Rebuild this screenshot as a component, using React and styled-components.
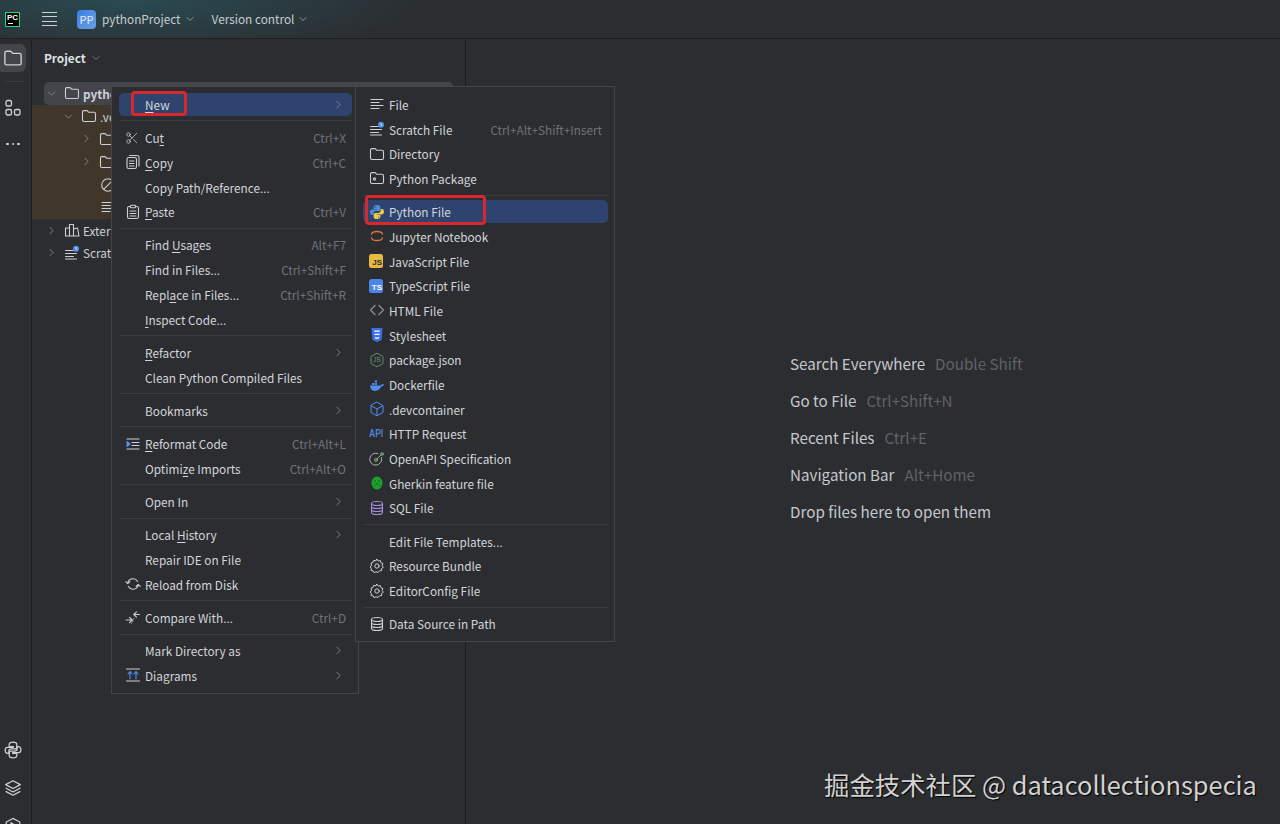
import React from "react";
import styled, { createGlobalStyle } from "styled-components";
import { ChevronDown, ChevronRight, Scissors } from "lucide-react";

const GlobalStyle = createGlobalStyle`
  html, body { margin: 0; padding: 0; height: 100%; background: #2b2d30; }
  #root { height: 100%; }
  * { box-sizing: border-box; }
`;

const PY_PATH =
  "M8 1C5.2 1 4.6 2.2 4.6 3.4V5h3.6v.6H3.1C1.8 5.6 1 6.8 1 8.2c0 1.5.8 2.7 2.1 2.7h1.2V9.4c0-1.3 1-2.3 2.3-2.3h2.9c1 0 1.9-.8 1.9-1.8V3.3C11.4 1.9 10.2 1 8 1z";

const Svg = ({ size = 16, children, stroke = "#ced0d6", sw = 1.1 }) => (
  <svg width={size} height={size} viewBox="0 0 16 16" fill="none" stroke={stroke} strokeWidth={sw} strokeLinecap="round" strokeLinejoin="round">
    {children}
  </svg>
);

const FolderIcon = ({ size = 16, stroke = "#ced0d6", sw = 1.1 }) => (
  <Svg size={size} stroke={stroke} sw={sw}>
    <path d="M1.5 4c0-.8.6-1.4 1.4-1.4h3.2l1.7 1.7h5.3c.8 0 1.4.6 1.4 1.4v6.4c0 .8-.6 1.4-1.4 1.4H2.9c-.8 0-1.4-.6-1.4-1.4z" />
  </Svg>
);
const PackageIcon = () => (
  <Svg>
    <path d="M1.5 4c0-.8.6-1.4 1.4-1.4h3.2l1.7 1.7h5.3c.8 0 1.4.6 1.4 1.4v6.4c0 .8-.6 1.4-1.4 1.4H2.9c-.8 0-1.4-.6-1.4-1.4z" />
    <circle cx="5.5" cy="9" r="1.1" />
  </Svg>
);
const LinesIcon = () => (
  <Svg>
    <path d="M2 3.5h12M2 6.5h8M2 9.5h12M2 12.5h8" />
  </Svg>
);
const ScratchIcon = () => (
  <Svg>
    <path d="M1.5 5.5h8M1.5 8.5h11M1.5 11.5h8M1.5 14h11" />
    <circle cx="12" cy="3.8" r="3" fill="#4f8ff0" stroke="none" />
    <path d="M12 2.5v1.5l1 .6" stroke="#fff" strokeWidth=".7" />
  </Svg>
);
const CopyIcon = () => (
  <Svg>
    <rect x="2" y="3.5" width="9.5" height="11" rx="1.8" />
    <path d="M4.5 1.5h7.5c1 0 2 1 2 2v8.5M4.5 7h4.5M4.5 9.5h4.5M4.5 12h4.5" />
  </Svg>
);
const PasteIcon = () => (
  <Svg>
    <rect x="2.5" y="2.5" width="11" height="12" rx="1.8" />
    <rect x="5.5" y="1.2" width="5" height="2.6" rx=".8" fill="#2b2d30" />
    <path d="M5 7h6M5 9.5h6M5 12h6" />
  </Svg>
);
const ReformatIcon = () => (
  <Svg>
    <path d="M2 3h12M7 6.5h7M7 9.5h7M2 13h12" />
    <path d="M2 5.5 5 8l-3 2.5z" fill="#4f8ff0" stroke="#4f8ff0" />
  </Svg>
);
const ReloadIcon = () => (
  <Svg>
    <path d="M2.8 7A5.3 5.3 0 0 1 12.6 5.4" />
    <path d="M13.2 9A5.3 5.3 0 0 1 3.4 10.6" />
    <path d="M.8 5.6 2.8 7.6l2-2M15.2 10.4l-2-2-2 2" />
  </Svg>
);
const CompareIcon = () => (
  <Svg>
    <path d="M9 5.5h5.5M11.5 2.8 8.8 5.5l2.7 2.7" />
    <path d="M1 11h6M4.5 8.3 7.2 11l-2.7 2.7" />
    <path d="M6.5 14.5 9 9" strokeWidth=".8" opacity=".7" />
  </Svg>
);
const DiagramIcon = () => (
  <Svg>
    <path d="M1.5 2h13M1.5 14h13" />
    <path d="M5 12V5M3 7l2-2.5L7 7M11 12V5M9 7l2-2.5L13 7" stroke="#4f8ff0" />
  </Svg>
);
const PythonIcon = () => (
  <svg width="16" height="16" viewBox="0 0 16 16">
    <path d={PY_PATH} fill="#4b8fd6" />
    <path d={PY_PATH} fill="#f2c945" transform="rotate(180 8 8)" />
    <circle cx="6.3" cy="3" r=".6" fill="#2b2d30" />
    <circle cx="9.7" cy="13" r=".6" fill="#2b2d30" />
  </svg>
);
const PythonOutline = () => (
  <svg width="18" height="18" viewBox="0 0 16 16" fill="none" stroke="#ced0d6" strokeWidth="1.1">
    <path d={PY_PATH} />
    <path d={PY_PATH} transform="rotate(180 8 8)" />
  </svg>
);
const JupyterIcon = () => (
  <Svg stroke="#e0703a" sw={1.3}>
    <path d="M2.5 6.2C3.5 2.6 12.5 2.6 13.5 6.2M2.5 9.8c1 3.6 10 3.6 11 0" />
  </Svg>
);
const BadgeIcon = ({ bg, fg, text }) => <Badge $bg={bg} $fg={fg}>{text}</Badge>;
const ApiIcon = () => <ApiText>API</ApiText>;
const HtmlIcon = () => (
  <Svg stroke="#8f9399" sw={1.2}>
    <path d="M6 3.5 1.5 8 6 12.5M10 3.5 14.5 8 10 12.5" />
  </Svg>
);
const CssIcon = () => (
  <svg width="16" height="16" viewBox="0 0 16 16">
    <path d="M2.5 1h11l-1 12-4.5 2-4.5-2z" fill="#3f6fe8" />
    <path d="M5.3 4.2h5.4M5.6 7.4h5M5.9 10.6l2.1.8 2.1-.8" stroke="#fff" strokeWidth="1.2" fill="none" />
  </svg>
);
const HexJsIcon = () => (
  <svg width="16" height="16" viewBox="0 0 16 16" fill="none" stroke="#5c8f6a" strokeWidth="1">
    <path d="M8 1.2 14 4.5v7L8 14.8 2 11.5v-7z" />
    <text x="8" y="10.4" fontSize="6.4" fill="#6f9a7b" stroke="none" textAnchor="middle" fontFamily="Liberation Sans, sans-serif">JS</text>
  </svg>
);
const DockerIcon = () => (
  <svg width="16" height="16" viewBox="0 0 16 16" fill="#4f8ff0">
    <path d="M1 8.5h10.6c.5-1 1.7-1.5 3.4-.9-.6 1.6-1.7 2-2.8 2C11 12.2 9 14 5.8 14 2.8 14 1.2 11.8 1 8.5z" />
    <rect x="3" y="6" width="2.2" height="1.9" />
    <rect x="5.8" y="6" width="2.2" height="1.9" />
    <rect x="5.8" y="3.4" width="2.2" height="1.9" />
  </svg>
);
const CubeIcon = () => (
  <Svg stroke="#4f8ff0" sw={1}>
    <path d="M8 1.2 14 4.5v7L8 14.8 2 11.5v-7zM2.4 4.8 8 8l5.6-3.2M8 8v6.5" />
  </Svg>
);
const OpenApiIcon = () => (
  <Svg stroke="#7fb48c" sw={1}>
    <path d="M12.5 6.5A6 6 0 1 1 8.8 2.5" stroke="#a9b0a9" />
    <circle cx="7" cy="9" r="1.4" />
    <path d="M8 8l4-4" />
    <circle cx="13" cy="3" r="1.3" />
  </Svg>
);
const GherkinIcon = () => (
  <svg width="16" height="16" viewBox="0 0 16 16">
    <ellipse cx="8" cy="8" rx="5.5" ry="6.5" fill="#1fa12f" />
    <circle cx="6" cy="6" r=".8" fill="#0d5c18" />
    <circle cx="10" cy="6" r=".8" fill="#0d5c18" />
    <circle cx="8" cy="9" r=".8" fill="#0d5c18" />
    <circle cx="5.5" cy="10.5" r=".7" fill="#0d5c18" />
    <circle cx="10.5" cy="10.5" r=".7" fill="#0d5c18" />
  </svg>
);
const DbIcon = ({ color = "#ced0d6" }) => (
  <Svg stroke={color} sw={1.1}>
    <ellipse cx="8" cy="3.5" rx="5.5" ry="2" />
    <path d="M2.5 3.5v9c0 1.1 2.5 2 5.5 2s5.5-.9 5.5-2v-9M2.5 6.5c0 1.1 2.5 2 5.5 2s5.5-.9 5.5-2M2.5 9.5c0 1.1 2.5 2 5.5 2s5.5-.9 5.5-2" />
  </Svg>
);
const GearIcon = () => (
  <Svg sw={1}>
    <path d="M8 1.3 9.3 3l2.1-.4.5 2.1 2 .8-.8 2 1.2 1.8-1.800 1.200.1 2.100-2.100.2L9 14.500l-2-.8-1.800 1.100-1-1.900-2.100-.3.2-2.100L1.300 9l1.200-1.800L2 5.100l2-.6.5-2.100 2.100.4z" />
    <circle cx="8" cy="8" r="2.2" />
  </Svg>
);
const ExcludedIcon = () => (
  <Svg>
    <circle cx="8" cy="8" r="6.3" />
    <path d="M3.8 12.2 12.2 3.8" />
  </Svg>
);
const LibraryIcon = () => (
  <Svg>
    <path d="M1.5 14V6h4v8zM5.5 14V2.5h4V14zM9.5 14V7l4-1 1.500 8z" />
  </Svg>
);
const StructureIcon = () => (
  <svg width="18" height="18" viewBox="0 0 18 18" fill="none" stroke="#ced0d6" strokeWidth="1.3">
    <rect x="2" y="1.5" width="5.5" height="5.5" rx="1.4" />
    <rect x="2" y="10.5" width="5.5" height="5.5" rx="1.4" />
    <rect x="10.5" y="10.5" width="5.5" height="5.5" rx="1.4" />
  </svg>
);
const LayersIcon = () => (
  <svg width="18" height="18" viewBox="0 0 16 16" fill="none" stroke="#ced0d6" strokeWidth="1.1" strokeLinejoin="round">
    <path d="M8 1.5 14.5 5 8 8.5 1.5 5z" />
    <path d="M1.5 8 8 11.5 14.5 8M1.5 11 8 14.5 14.5 11" />
  </svg>
);
const ServicesIcon = () => (
  <svg width="18" height="18" viewBox="0 0 16 16" fill="none" stroke="#ced0d6" strokeWidth="1.1">
    <path d="M8 1.2 14 4.5v7L8 14.8 2 11.5v-7z" />
    <path d="M6.3 5.2 11 8l-4.7 2.8z" fill="#ced0d6" />
  </svg>
);

const mainMenu = [
  [{ label: <><u>N</u>ew</>, arrow: true, active: true, boxed: 56 }],
  [
    { icon: <Scissors size={14} strokeWidth={1.3} color="#ced0d6" />, label: <>Cu<u>t</u></>, key: "Ctrl+X" },
    { icon: <CopyIcon />, label: <><u>C</u>opy</>, key: "Ctrl+C" },
    { label: "Copy Path/Reference..." },
    { icon: <PasteIcon />, label: <><u>P</u>aste</>, key: "Ctrl+V" },
  ],
  [
    { label: <>Find <u>U</u>sages</>, key: "Alt+F7" },
    { label: "Find in Files...", key: "Ctrl+Shift+F" },
    { label: <>Repl<u>a</u>ce in Files...</>, key: "Ctrl+Shift+R" },
    { label: <><u>I</u>nspect Code...</> },
  ],
  [{ label: <><u>R</u>efactor</>, arrow: true }, { label: "Clean Python Compiled Files" }],
  [{ label: "Bookmarks", arrow: true }],
  [
    { icon: <ReformatIcon />, label: <><u>R</u>eformat Code</>, key: "Ctrl+Alt+L" },
    { label: <>Optimi<u>z</u>e Imports</>, key: "Ctrl+Alt+O" },
  ],
  [{ label: "Open In", arrow: true }],
  [
    { label: <>Local <u>H</u>istory</>, arrow: true },
    { label: "Repair IDE on File" },
    { icon: <ReloadIcon />, label: "Reload from Disk" },
  ],
  [{ icon: <CompareIcon />, label: "Compare With...", key: "Ctrl+D" }],
  [{ label: "Mark Directory as", arrow: true }, { icon: <DiagramIcon />, label: "Diagrams", arrow: true }],
];

const subMenu = [
  [
    { icon: <LinesIcon />, label: "File" },
    { icon: <ScratchIcon />, label: "Scratch File", key: "Ctrl+Alt+Shift+Insert" },
    { icon: <FolderIcon />, label: "Directory" },
    { icon: <PackageIcon />, label: "Python Package" },
  ],
  [
    { icon: <PythonIcon />, label: "Python File", active: true, boxed: 121 },
    { icon: <JupyterIcon />, label: "Jupyter Notebook" },
    { icon: <BadgeIcon bg="#e8b93f" fg="#2b2d30" text="JS" />, label: "JavaScript File" },
    { icon: <BadgeIcon bg="#4a86e8" fg="#fff" text="TS" />, label: "TypeScript File" },
    { icon: <HtmlIcon />, label: "HTML File" },
    { icon: <CssIcon />, label: "Stylesheet" },
    { icon: <HexJsIcon />, label: "package.json" },
    { icon: <DockerIcon />, label: "Dockerfile" },
    { icon: <CubeIcon />, label: ".devcontainer" },
    { icon: <ApiIcon />, label: "HTTP Request" },
    { icon: <OpenApiIcon />, label: "OpenAPI Specification" },
    { icon: <GherkinIcon />, label: "Gherkin feature file" },
    { icon: <DbIcon color="#a58fd6" />, label: "SQL File" },
  ],
  [
    { label: "Edit File Templates..." },
    { icon: <GearIcon />, label: "Resource Bundle" },
    { icon: <GearIcon />, label: "EditorConfig File" },
  ],
  [{ icon: <DbIcon />, label: "Data Source in Path" }],
];

const treeRows = [
  { x: 1, open: true, icon: <FolderIcon />, label: "pythonProject", selected: true },
  { x: 30, open: true, icon: <FolderIcon />, label: ".venv", excluded: true },
  { x: 48, icon: <FolderIcon />, label: "Lib", excluded: true },
  { x: 48, icon: <FolderIcon />, label: "Scripts", excluded: true },
  { x: 49, icon: <ExcludedIcon />, label: ".gitignore", excluded: true, leaf: true },
  { x: 49, icon: <LinesIcon />, label: "pyvenv.cfg", excluded: true, leaf: true },
  { x: 13, icon: <LibraryIcon />, label: "External Libraries" },
  { x: 13, icon: <ScratchIcon />, label: "Scratches and Consoles" },
];

const hints = [
  ["Search Everywhere", "Double Shift"],
  ["Go to File", "Ctrl+Shift+N"],
  ["Recent Files", "Ctrl+E"],
  ["Navigation Bar", "Alt+Home"],
  ["Drop files here to open them", ""],
];

function MenuGroups({ groups, wide }) {
  return groups.map((group, g) => (
    <React.Fragment key={g}>
      {g > 0 && <Separator />}
      {group.map((item, i) => (
        <MenuRow key={i} $active={item.active}>
          <IconSlot>{item.icon}</IconSlot>
          <span>{item.label}</span>
          {item.key && <Shortcut>{item.key}</Shortcut>}
          {item.arrow && <Arrow><ChevronRight size={13} strokeWidth={1.3} /></Arrow>}
          {item.boxed && <RedBox $wide={wide} $w={item.boxed} />}
        </MenuRow>
      ))}
    </React.Fragment>
  ));
}

export default function App() {
  return (
    <>
      <GlobalStyle />
      <Page>
        <TopBar>
          <Logo><span>PC</span><i /></Logo>
          <Burger><b /><b /><b /><b /></Burger>
          <ProjectBadge>PP</ProjectBadge>
          <TopLabel>pythonProject<ChevronDown size={12} strokeWidth={1.3} /></TopLabel>
          <TopLabel $gap>Version control<ChevronDown size={12} strokeWidth={1.3} /></TopLabel>
        </TopBar>
        <Body>
          <Rail>
            <RailActive><FolderIcon size={20} /></RailActive>
            <RailDivider />
            <RailButton $mt={17}><StructureIcon /></RailButton>
            <Dots><b /><b /><b /></Dots>
            <RailBottom>
              <RailButton><PythonOutline /></RailButton>
              <RailButton><LayersIcon /></RailButton>
              <RailButton><ServicesIcon /></RailButton>
            </RailBottom>
          </Rail>
          <ProjectPanel>
            <PanelHeader>Project<ChevronDown size={12} strokeWidth={1.3} color="#9da0a8" /></PanelHeader>
            {treeRows.map((row, i) => (
              <TreeRow key={i} $x={row.x} $selected={row.selected} $excluded={row.excluded}>
                <TreeArrow>
                  {!row.leaf && (row.open ? <ChevronDown size={13} strokeWidth={1.3} /> : <ChevronRight size={13} strokeWidth={1.3} />)}
                </TreeArrow>
                {row.icon}
                <TreeLabel $bold={row.selected}>{row.label}</TreeLabel>
              </TreeRow>
            ))}
          </ProjectPanel>
          <Editor>
            {hints.map(([text, key], i) => (
              <Hint key={i}>{text}{key && <HintKey>{key}</HintKey>}</Hint>
            ))}
          </Editor>
        </Body>
        <ContextMenu>
          <MenuGroups groups={mainMenu} />
        </ContextMenu>
        <SubMenu>
          <MenuGroups groups={subMenu} wide />
        </SubMenu>
        <Watermark>掘金技术社区 @ datacollectionspecia</Watermark>
      </Page>
    </>
  );
}

const Page = styled.div`
  position: relative;
  width: 1280px;
  height: 824px;
  overflow: hidden;
  display: flex;
  flex-direction: column;
  background: #2b2d30;
  color: #ced0d6;
  font-family: "Noto Sans CJK SC", "Noto Sans", sans-serif;
  font-size: 11.8px;
`;

const TopBar = styled.header`
  height: 39px;
  flex: none;
  display: flex;
  align-items: center;
  padding-left: 5px;
  border-bottom: 1px solid #1e1f22;
  background:
    radial-gradient(ellipse 300px 60px at 130px 0, rgba(40, 95, 105, 0.6), rgba(43, 45, 48, 0) 100%),
    #2b2d30;
`;

const Logo = styled.div`
  position: relative;
  width: 15px;
  height: 15px;
  background: #000;
  border: 1px solid #21d789;
  display: flex;
  justify-content: center;
  font: bold 8px/10px "Liberation Sans", sans-serif;
  color: #fff;
  i {
    position: absolute;
    left: 2px;
    bottom: 2px;
    width: 5px;
    height: 1px;
    background: #fff;
  }
`;

const Burger = styled.div`
  margin-left: 22px;
  width: 15px;
  height: 14px;
  display: flex;
  flex-direction: column;
  justify-content: space-between;
  b {
    display: block;
    height: 1.2px;
    background: #ced0d6;
  }
`;

const ProjectBadge = styled.div`
  margin-left: 20px;
  width: 19px;
  height: 19px;
  border-radius: 4px;
  background: linear-gradient(135deg, #3c7fe0, #6ba0e8);
  color: #e8f0fb;
  font-size: 11px;
  display: flex;
  align-items: center;
  justify-content: center;
`;

const TopLabel = styled.div`
  margin-left: ${(p) => (p.$gap ? "16px" : "6px")};
  padding-bottom: 1px;
  display: flex;
  align-items: center;
  gap: 3px;
  color: #c9ccd2;
`;

const Body = styled.div`
  flex: 1;
  min-height: 0;
  display: flex;
`;

const Rail = styled.nav`
  width: 32px;
  flex: none;
  height: calc(100% + 11px);
  display: flex;
  flex-direction: column;
  border-right: 1px solid #1e1f22;
`;

const RailActive = styled.div`
  margin-top: 5px;
  width: 26px;
  height: 28px;
  border-radius: 0 6px 6px 0;
  background: #43454a;
  display: flex;
  align-items: center;
  justify-content: center;
`;

const RailDivider = styled.div`
  margin: 9px 0 0 5px;
  width: 19px;
  height: 1px;
  background: #393b40;
`;

const RailButton = styled.div`
  margin-top: ${(p) => (p.$mt ? `${p.$mt}px` : "0")};
  width: 26px;
  height: 18px;
  display: flex;
  align-items: center;
  justify-content: center;
`;

const Dots = styled.div`
  margin-top: 26px;
  width: 26px;
  display: flex;
  justify-content: center;
  gap: 3px;
  b {
    width: 2.4px;
    height: 2.4px;
    border-radius: 50%;
    background: #ced0d6;
  }
`;

const RailBottom = styled.div`
  margin-top: auto;
  display: flex;
  flex-direction: column;
  gap: 20px;
`;

const ProjectPanel = styled.section`
  width: 434px;
  flex: none;
  border-right: 1px solid #1e1f22;
`;

const PanelHeader = styled.div`
  height: 43px;
  padding: 0 0 6px 12px;
  display: flex;
  align-items: center;
  gap: 4px;
  font-weight: 700;
  color: #dfe1e5;
`;

const TreeRow = styled.div`
  height: 22.8px;
  display: flex;
  align-items: center;
  margin: ${(p) => (p.$selected ? "0 12px" : "0")};
  padding-left: ${(p) => p.$x}px;
  border-radius: ${(p) => (p.$selected ? "5px" : "0")};
  background: ${(p) => (p.$selected ? "#43454a" : p.$excluded ? "#40372a" : "transparent")};
`;

const TreeArrow = styled.span`
  width: 19px;
  flex: none;
  display: flex;
  color: #9da0a8;
`;

const TreeLabel = styled.span`
  margin-left: 3px;
  font-weight: ${(p) => (p.$bold ? 700 : 400)};
`;

const Editor = styled.main`
  flex: 1;
  padding: 314px 0 0 324px;
  display: flex;
  flex-direction: column;
  gap: 15px;
`;

const Hint = styled.div`
  height: 22px;
  font-size: 15.2px;
  line-height: 21px;
  color: #c5c8ce;
  white-space: nowrap;
`;

const HintKey = styled.span`
  margin-left: 10px;
  color: #5f6268;
`;

const ContextMenu = styled.div`
  position: absolute;
  left: 111px;
  top: 86px;
  width: 248px;
  padding: 5px 6px 5px 7px;
  background: #2b2d30;
  border: 1px solid #43454a;
  z-index: 2;
`;

const SubMenu = styled(ContextMenu)`
  left: 355px;
  width: 260px;
  z-index: 3;
`;

const MenuRow = styled.div`
  position: relative;
  height: 24.7px;
  display: flex;
  align-items: center;
  padding-left: 6px;
  white-space: nowrap;
  color: #d3d5da;
  &::before {
    content: "";
    display: ${(p) => (p.$active ? "block" : "none")};
    position: absolute;
    inset: 1px 0;
    border-radius: 5px;
    background: #2e436e;
  }
  & > * {
    position: relative;
  }
  u {
    text-underline-offset: 2px;
    text-decoration-thickness: 1px;
  }
`;

const IconSlot = styled.span`
  width: 20px;
  flex: none;
  display: flex;
  align-items: center;
`;

const Shortcut = styled.span`
  margin-left: auto;
  padding-right: 6px;
  color: #6f737a;
`;

const Arrow = styled.span`
  margin-left: auto;
  padding-right: 7px;
  display: flex;
  color: #9da0a8;
`;

const RedBox = styled.span`
  &&& {
    position: absolute;
  }
  left: ${(p) => (p.$wide ? "2px" : "12px")};
  top: ${(p) => (p.$wide ? "-4px" : "-1px")};
  width: ${(p) => p.$w}px;
  height: ${(p) => (p.$wide ? "30px" : "25px")};
  border: 3px solid #d9282b;
  border-radius: 4px;
`;

const Separator = styled.div`
  height: 8.6px;
  display: flex;
  align-items: center;
  &::after {
    content: "";
    display: block;
    width: 100%;
    height: 1px;
    background: #393b40;
  }
`;

const Badge = styled.span`
  width: 14px;
  height: 14px;
  border-radius: 2.5px;
  background: ${(p) => p.$bg};
  color: ${(p) => p.$fg};
  display: flex;
  align-items: flex-end;
  justify-content: flex-end;
  padding: 0 1px;
  font: bold 8px/10px "Liberation Sans", sans-serif;
`;

const ApiText = styled.span`
  color: #4f7fd8;
  font: bold 10px/14px "Liberation Sans Narrow", "Liberation Sans", sans-serif;
  transform: scaleX(0.85);
  transform-origin: left center;
`;

const Watermark = styled.div`
  position: absolute;
  left: 824px;
  top: 766px;
  font-family: "Noto Sans CJK SC", "Noto Sans", sans-serif;
  font-size: 25.4px;
  line-height: 36px;
  color: #d2d2d2;
  text-shadow: 1px 1px 1px #000;
  white-space: nowrap;
  z-index: 4;
`;
